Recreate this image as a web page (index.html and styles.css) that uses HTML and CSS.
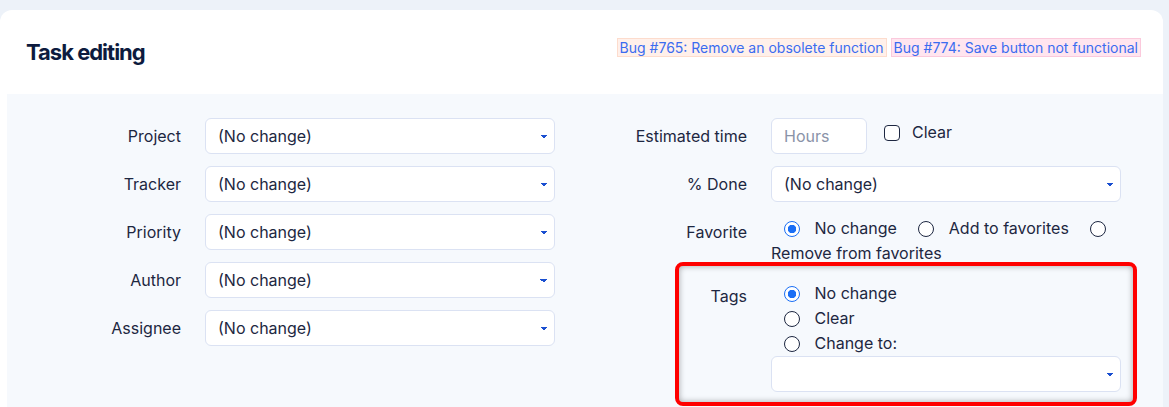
FILE: index.html
```html
<!DOCTYPE html>
<html>
<head>
<meta charset="utf-8">
<title>Task editing</title>
<link rel="stylesheet" href="styles.css">
</head>
<body>
<div class="card">
	<!--head-->
	<div class="card-head">
		<h2>Task editing</h2>
		<div class="bugs"><a class="bug bug-a" href="#">Bug #765: Remove an obsolete function</a> <a class="bug bug-b" href="#">Bug #774: Save button not functional</a></div>
	</div>
	<!--form-->
	<div class="form">
		<div class="col">
			<div class="row"><label>Project</label><select><option>(No change)</option></select></div>
			<div class="row"><label>Tracker</label><select><option>(No change)</option></select></div>
			<div class="row"><label>Priority</label><select><option>(No change)</option></select></div>
			<div class="row"><label>Author</label><select><option>(No change)</option></select></div>
			<div class="row"><label>Assignee</label><select><option>(No change)</option></select></div>
		</div>
		<div class="col">
			<div class="row"><label>Estimated time</label>
				<div class="inline">
					<input class="hours" type="text" placeholder="Hours">
					<label class="check"><input type="checkbox"> Clear</label>
				</div>
			</div>
			<div class="row"><label>% Done</label><select><option>(No change)</option></select></div>
			<div class="row"><label>Favorite</label>
				<div class="radios">
					<label><input type="radio" name="fav" checked> No change</label>
					<label><input type="radio" name="fav"> Add to favorites</label>
					<label><input type="radio" name="fav"> Remove from favorites</label>
				</div>
			</div>
			<div class="row tags"><label>Tags</label>
				<div class="radios stack">
					<label><input type="radio" name="tags" checked> No change</label>
					<label><input type="radio" name="tags"> Clear</label>
					<label><input type="radio" name="tags"> Change to:</label>
					<select><option></option></select>
				</div>
			</div>
		</div>
	</div>
</div>
</body>
</html>
```

FILE: styles.css
```css
html,body,div,h2{margin:0;padding:0;}
body{background:#edf2f9;font:16px Inter,"Noto Sans",sans-serif;color:#1d2741;padding-top:10px;overflow:hidden;}
/*card*/
.card{background:#fff;margin-right:6px;border-radius:12px 12px 0 0;padding-left:7px;}
.card-head{height:84px;display:flex;align-items:center;justify-content:space-between;padding:0 22px 0 19px;}
	.card-head h2{font-size:22px;font-weight:700;letter-spacing:-1px;color:#0d1b3e;}
	.bugs{margin-bottom:9px;font-size:14px;line-height:17px;}
	.bug{display:inline-block;padding:0 2px;color:#3b6cf0;text-decoration:none;border:1px solid;}
	.bug-a{background:#fff0ea;border-color:#fddccd;}
	.bug-b{background:#ffe5ef;border-color:#fbc9dc;}
/*form*/
.form{background:#f6f9fd;display:flex;gap:32px;padding:24px 0 40px 14px;}
	.col{display:flex;flex-direction:column;gap:12px;}
	.row{display:grid;grid-template-columns:160px 350px;column-gap:24px;align-items:start;position:relative;}
	.row > label{text-align:right;line-height:36px;}
select{appearance:none;-webkit-appearance:none;height:36px;width:350px;border:1px solid #dbe2f3;border-radius:6px;background-color:#fff;font:16px Inter,"Noto Sans",sans-serif;color:#1d2741;padding:0 24px 0 12px;
	background-image:linear-gradient(45deg,transparent 50%,#1a4fd0 50%),linear-gradient(135deg,#1a4fd0 50%,transparent 50%);
	background-size:4px 4px,4px 4px;background-position:calc(100% - 10px) 16px,calc(100% - 6px) 16px;background-repeat:no-repeat;}
.inline{display:flex;align-items:flex-start;}
	.hours{width:96px;height:36px;box-sizing:border-box;border:1px solid #dbe2f3;border-radius:6px;font:16px Inter,"Noto Sans",sans-serif;padding:0 12px;}
	.hours::placeholder{color:#8a93a8;}
	.check{margin-left:17px;line-height:25px;padding-top:2px;display:flex;align-items:center;gap:8px;}
input[type=checkbox]{appearance:none;-webkit-appearance:none;width:16px;height:16px;margin:0 4px 0 0;border:1.5px solid #1d2741;border-radius:4px;background:#fff;box-sizing:border-box;}
/*radios*/
.radios{padding-top:2px;line-height:25px;}
	.radios label{margin-right:4px;}
	.stack{padding-top:3px;}
	.stack label{display:block;margin:0;}
input[type=radio]{appearance:none;-webkit-appearance:none;width:16px;height:16px;margin:0 10px 0 13px;vertical-align:-3px;border:1.5px solid #1d2741;border-radius:50%;background:#fff;box-sizing:border-box;}
input[type=radio]:checked{border-color:#1a6ef5;background:radial-gradient(circle,#1a6ef5 0 4px,#fff 4.5px);}
/*annotation*/
.tags::after{content:"";position:absolute;left:88px;right:-16px;top:-16px;bottom:-14px;border:4px solid #ff0000;border-radius:8px;box-shadow:inset 0 0 6px rgba(0,0,0,.35);pointer-events:none;}
```
